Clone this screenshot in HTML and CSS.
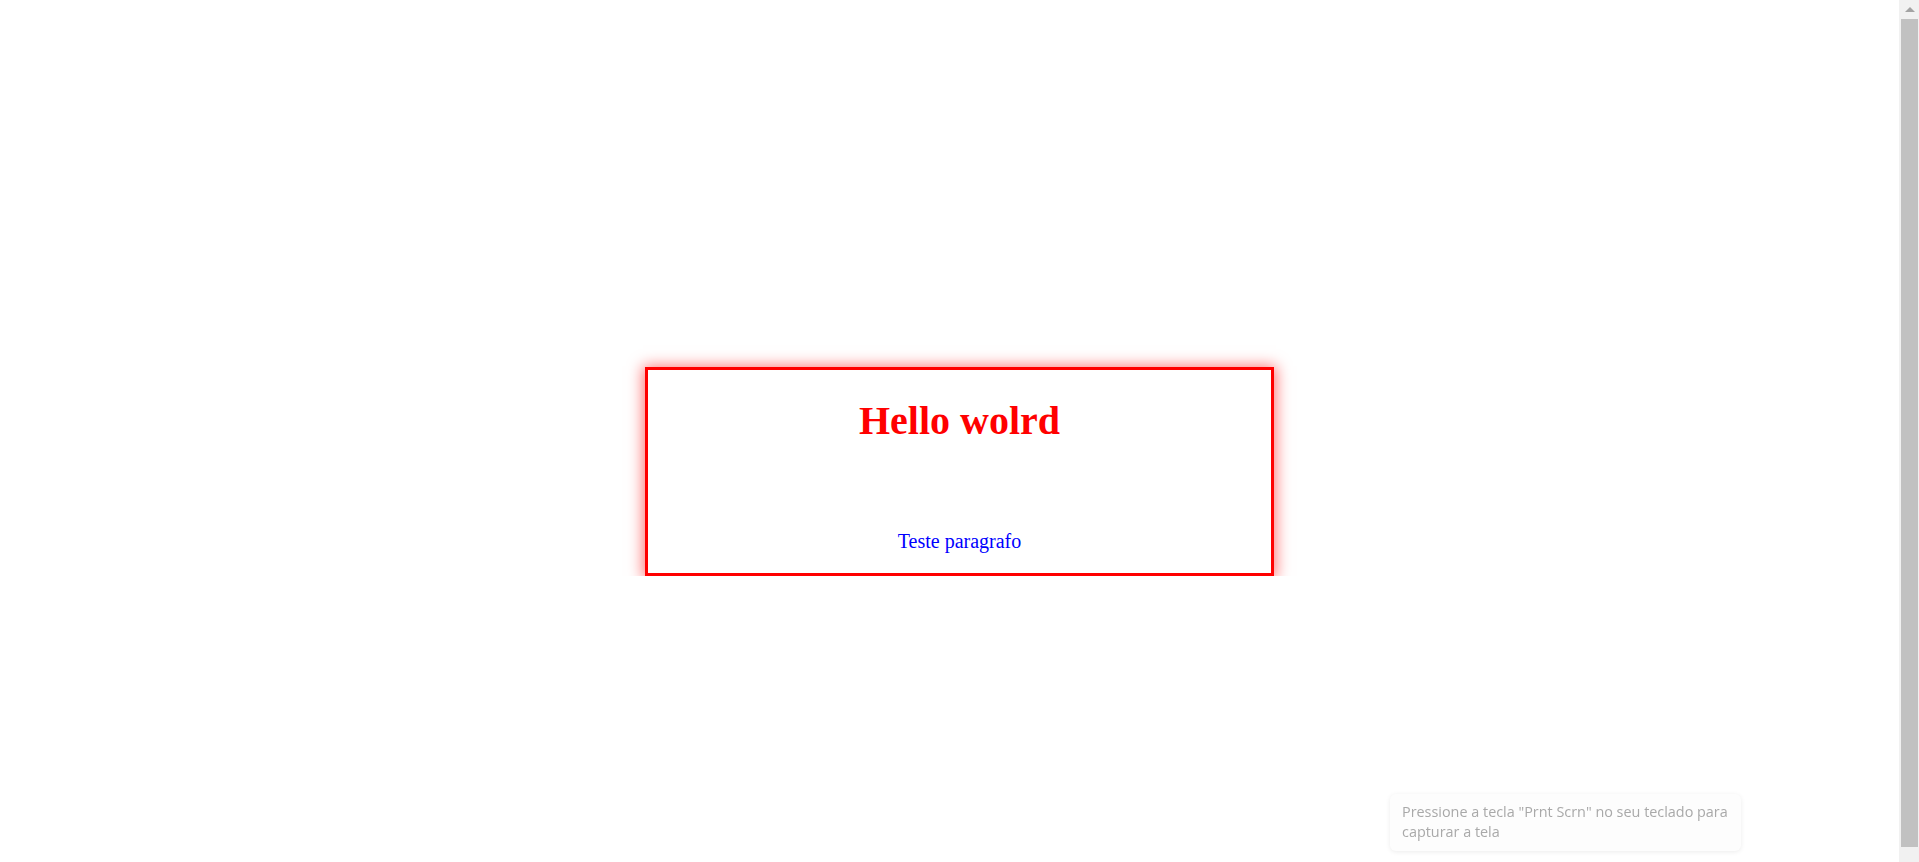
FILE: index.html
```html
<!DOCTYPE html>
<html lang="pt">
<head>
<meta charset="utf-8">
<title>Hello wolrd</title>
<link rel="stylesheet" href="styles.css">
</head>
<body>
<main class="page">
  <section class="card">
    <h1 class="title">Hello wolrd</h1>
    <p class="text">Teste paragrafo</p>
  </section>
</main>
<div class="toast">Pressione a tecla "Prnt Scrn" no seu teclado para capturar a tela</div>
<div class="scrollbar">
  <div class="sb-btn"><span class="sb-arrow"></span></div>
  <div class="sb-thumb"></div>
  <div class="sb-btn sb-btn-bottom"></div>
</div>
</body>
</html>
```
FILE: styles.css
```css
html, body {
  margin: 0;
  padding: 0;
  background: #ffffff;
  overflow: hidden;
}
body {
  font-family: "Liberation Serif", "Times New Roman", serif;
}
.page {
  display: flex;
  justify-content: center;
  padding-top: 367px;
}
.card {
  width: 629px;
  box-sizing: border-box;
  border: 3px solid #ff0000;
  box-shadow: 0 1px 14px 2px rgba(255, 0, 0, 0.55);
  padding: 28px 0 20px;
  text-align: center;
  display: flex;
  flex-direction: column;
  align-items: center;
}
.title {
  margin: 0;
  font-size: 40px;
  line-height: 46px;
  font-weight: 700;
  color: #ff0000;
}
.text {
  margin: 86px 0 0;
  font-size: 20px;
  line-height: 23px;
  color: #0000ff;
}
.toast {
  position: fixed;
  right: 178px;
  bottom: 11px;
  width: 351px;
  height: 57px;
  box-sizing: border-box;
  padding: 8px 6px 0 12px;
  background: #fdfdfd;
  border-radius: 6px;
  box-shadow: 0 1px 5px rgba(0, 0, 0, 0.08);
  font-family: "Open Sans", "Noto Sans", sans-serif;
  font-size: 14.4px;
  line-height: 20px;
  color: #a9a9a9;
}
.scrollbar {
  position: fixed;
  top: 0;
  right: 0;
  width: 20px;
  height: 862px;
  background: #f1f1f1;
  display: flex;
  flex-direction: column;
}
.sb-btn {
  height: 19px;
  display: flex;
  justify-content: center;
  align-items: center;
  flex: none;
}
.sb-arrow {
  width: 0;
  height: 0;
  border-left: 5px solid transparent;
  border-right: 5px solid transparent;
  border-bottom: 5px solid #a3a3a3;
  margin-left: 1px;
}
.sb-thumb {
  flex: 1;
  background: #c1c1c1;
  margin: 0 1px 0 2px;
}
.sb-btn-bottom {
  height: 15px;
}
```
